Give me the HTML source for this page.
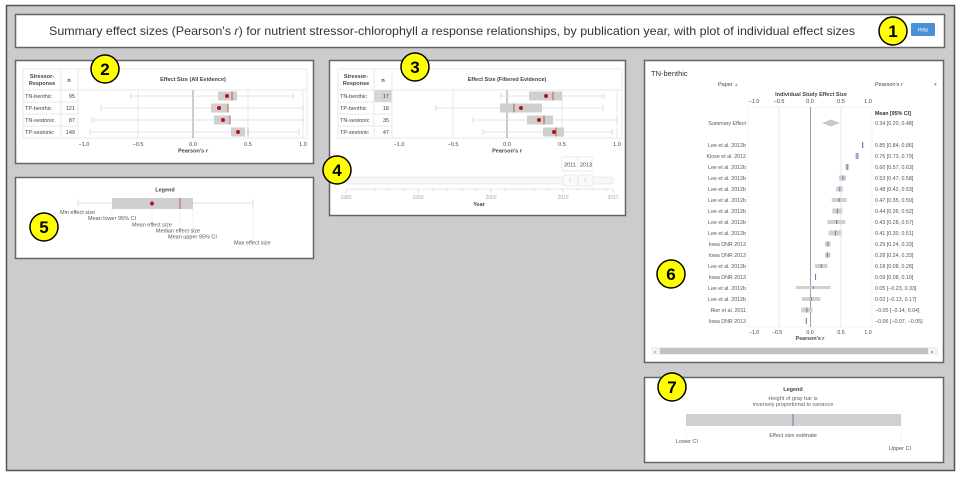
<!DOCTYPE html>
<html><head><meta charset="utf-8"><style>
html,body{margin:0;padding:0;background:#fff;}
svg{display:block;font-family:"Liberation Sans",sans-serif;}
</style></head><body>
<svg width="960" height="481" viewBox="0 0 960 481" xmlns="http://www.w3.org/2000/svg">
<rect x="6.5" y="5.5" width="948" height="465" fill="#cccccc" stroke="#555" stroke-width="1.5"/>
<!-- header -->
<rect x="15.5" y="14.5" width="929" height="33" fill="#fff" stroke="#666" stroke-width="1.5"/>
<text x="452" y="35" font-size="12" fill="#333" text-anchor="middle" textLength="806" lengthAdjust="spacingAndGlyphs">Summary effect sizes (Pearson's <tspan font-style="italic">r</tspan>) for nutrient stressor-chlorophyll <tspan font-style="italic">a</tspan> response relationships, by publication year, with plot of individual effect sizes</text>
<rect x="911" y="23" width="24" height="13" fill="#4a90d9" rx="1"/>
<text x="923" y="31.5" font-size="5" fill="#fff" text-anchor="middle">Help</text>

<!-- panel 2 -->
<rect x="15.5" y="60.5" width="298" height="103" fill="#fff" stroke="#666" stroke-width="1.5"/>
<g stroke="#e3e3e3" stroke-width="0.8" fill="none">
<rect x="23" y="69" width="284" height="69"/>
<line x1="23" y1="90" x2="307" y2="90"/><line x1="23" y1="102" x2="78" y2="102"/><line x1="23" y1="114" x2="78" y2="114"/><line x1="23" y1="126" x2="78" y2="126"/>
<line x1="61" y1="69" x2="61" y2="138"/><line x1="78" y1="69" x2="78" y2="138"/>
<line x1="138" y1="90" x2="138" y2="138"/><line x1="248" y1="90" x2="248" y2="138"/><line x1="303" y1="90" x2="303" y2="138"/>
</g>
<line x1="193" y1="90" x2="193" y2="138" stroke="#999" stroke-width="1"/>
<g font-size="5.5" fill="#444">
<text x="42" y="78" text-anchor="middle" font-weight="bold">Stressor-</text><text x="42" y="85" text-anchor="middle" font-weight="bold">Response</text>
<text x="69" y="82" text-anchor="middle" font-weight="bold">n</text>
<text x="193" y="81" text-anchor="middle" font-weight="bold">Effect Size (All Evidence)</text>
<text x="25" y="98">TN-benthic</text><text x="75" y="98" text-anchor="end">95</text>
<text x="25" y="110">TP-benthic</text><text x="75" y="110" text-anchor="end">121</text>
<text x="25" y="122">TN-sestonic</text><text x="75" y="122" text-anchor="end">87</text>
<text x="25" y="134">TP-sestonic</text><text x="75" y="134" text-anchor="end">149</text>
<text x="84" y="146" text-anchor="middle">−1.0</text><text x="138" y="146" text-anchor="middle">−0.5</text><text x="193" y="146" text-anchor="middle">0.0</text><text x="248" y="146" text-anchor="middle">0.5</text><text x="303" y="146" text-anchor="middle">1.0</text>
<text x="193" y="152.5" text-anchor="middle" font-weight="bold">Pearson's <tspan font-style="italic">r</tspan></text>
</g>
<g stroke="#d6d6d6" stroke-width="0.8">
<line x1="131" y1="96" x2="293" y2="96"/><line x1="131" y1="93" x2="131" y2="99"/><line x1="293" y1="93" x2="293" y2="99"/>
<line x1="101" y1="108" x2="303" y2="108"/><line x1="101" y1="105" x2="101" y2="111"/><line x1="303" y1="105" x2="303" y2="111"/>
<line x1="92" y1="120" x2="303" y2="120"/><line x1="92" y1="117" x2="92" y2="123"/><line x1="303" y1="117" x2="303" y2="123"/>
<line x1="90" y1="132" x2="299" y2="132"/><line x1="90" y1="129" x2="90" y2="135"/><line x1="299" y1="129" x2="299" y2="135"/>
</g>
<g fill="#cfcfcf">
<rect x="218" y="91.5" width="19" height="9"/><rect x="211" y="103.5" width="17" height="9"/><rect x="214" y="115.5" width="16" height="9"/><rect x="231" y="127.5" width="14" height="9"/>
</g>
<g stroke="#c0392b" stroke-width="0.8">
<line x1="232" y1="91.5" x2="232" y2="100.5"/><line x1="228" y1="103.5" x2="228" y2="112.5"/><line x1="230" y1="115.5" x2="230" y2="124.5"/><line x1="248" y1="127.5" x2="248" y2="136.5" stroke="#e49a9a"/>
</g>
<g fill="#b5121b"><circle cx="227" cy="96" r="2"/><circle cx="219" cy="108" r="2"/><circle cx="223" cy="120" r="2"/><circle cx="238" cy="132" r="2"/></g>

<!-- panel 5 -->
<rect x="15.5" y="177.5" width="298" height="81" fill="#fff" stroke="#666" stroke-width="1.5"/>
<text x="165" y="191.5" font-size="5.5" font-weight="bold" fill="#444" text-anchor="middle">Legend</text>
<line x1="78" y1="203" x2="253" y2="203" stroke="#d6d6d6" stroke-width="0.8"/>
<line x1="78" y1="199" x2="78" y2="207" stroke="#d6d6d6" stroke-width="0.8"/><line x1="253" y1="199" x2="253" y2="207" stroke="#d6d6d6" stroke-width="0.8"/>
<rect x="112" y="198" width="81" height="11" fill="#cfcfcf"/>
<line x1="180" y1="198" x2="180" y2="209" stroke="#c0392b" stroke-width="0.8"/>
<circle cx="152" cy="203.5" r="2" fill="#b5121b"/>
<g stroke="#ccc" stroke-width="0.5" stroke-dasharray="1,1">
<line x1="112" y1="209" x2="112" y2="216"/><line x1="152" y1="209" x2="152" y2="223"/><line x1="180" y1="209" x2="180" y2="229"/><line x1="193" y1="209" x2="193" y2="235"/><line x1="253" y1="207" x2="253" y2="241"/>
</g>
<g font-size="5.5" fill="#555">
<text x="60" y="214">Min effect size</text><text x="88" y="220">Mean lower 95% CI</text><text x="132" y="226.5">Mean effect size</text><text x="156" y="232.5">Median effect size</text><text x="168" y="238.5">Mean upper 95% CI</text><text x="234" y="244.5">Max effect size</text>
</g>

<!-- panel 3/4 -->
<rect x="329.5" y="60.5" width="296" height="155" fill="#fff" stroke="#666" stroke-width="1.5"/>
<rect x="374" y="90" width="18" height="12" fill="#d5d5d5"/>
<g stroke="#e3e3e3" stroke-width="0.8" fill="none">
<rect x="338" y="69" width="284" height="69"/>
<line x1="338" y1="90" x2="622" y2="90"/><line x1="338" y1="102" x2="392" y2="102"/><line x1="338" y1="114" x2="392" y2="114"/><line x1="338" y1="126" x2="392" y2="126"/>
<line x1="374" y1="69" x2="374" y2="138"/><line x1="392" y1="69" x2="392" y2="138"/>
<line x1="453" y1="90" x2="453" y2="138"/><line x1="562" y1="90" x2="562" y2="138"/><line x1="617" y1="90" x2="617" y2="138"/>
</g>
<line x1="507" y1="90" x2="507" y2="138" stroke="#999" stroke-width="1"/>
<g font-size="5.5" fill="#444">
<text x="356" y="78" text-anchor="middle" font-weight="bold">Stressor-</text><text x="356" y="85" text-anchor="middle" font-weight="bold">Response</text>
<text x="383" y="82" text-anchor="middle" font-weight="bold">n</text>
<text x="507" y="81" text-anchor="middle" font-weight="bold">Effect Size (Filtered Evidence)</text>
<text x="340" y="98">TN-benthic</text><text x="389" y="98" text-anchor="end">17</text>
<text x="340" y="110">TP-benthic</text><text x="389" y="110" text-anchor="end">18</text>
<text x="340" y="122">TN-sestonic</text><text x="389" y="122" text-anchor="end">35</text>
<text x="340" y="134">TP-sestonic</text><text x="389" y="134" text-anchor="end">47</text>
<text x="399" y="146" text-anchor="middle">−1.0</text><text x="453" y="146" text-anchor="middle">−0.5</text><text x="507" y="146" text-anchor="middle">0.0</text><text x="562" y="146" text-anchor="middle">0.5</text><text x="617" y="146" text-anchor="middle">1.0</text>
<text x="507" y="152.5" text-anchor="middle" font-weight="bold">Pearson's <tspan font-style="italic">r</tspan></text>
</g>
<g stroke="#d6d6d6" stroke-width="0.8">
<line x1="501" y1="96" x2="604" y2="96"/><line x1="501" y1="93" x2="501" y2="99"/><line x1="604" y1="93" x2="604" y2="99"/>
<line x1="436" y1="108" x2="603" y2="108"/><line x1="436" y1="105" x2="436" y2="111"/><line x1="603" y1="105" x2="603" y2="111"/>
<line x1="473" y1="120" x2="617" y2="120"/><line x1="473" y1="117" x2="473" y2="123"/><line x1="617" y1="117" x2="617" y2="123"/>
<line x1="483" y1="132" x2="612" y2="132"/><line x1="483" y1="129" x2="483" y2="135"/><line x1="612" y1="129" x2="612" y2="135"/>
</g>
<g fill="#cfcfcf">
<rect x="529" y="91.5" width="33" height="9"/><rect x="500" y="103.5" width="42" height="9"/><rect x="527" y="115.5" width="26" height="9"/><rect x="543" y="127.5" width="21" height="9"/>
</g>
<g stroke="#c0392b" stroke-width="0.8">
<line x1="553" y1="91.5" x2="553" y2="100.5"/><line x1="514" y1="103.5" x2="514" y2="112.5"/><line x1="544" y1="115.5" x2="544" y2="124.5"/><line x1="556" y1="127.5" x2="556" y2="136.5"/>
</g>
<g fill="#b5121b"><circle cx="546" cy="96" r="2"/><circle cx="521" cy="108" r="2"/><circle cx="539" cy="120" r="2"/><circle cx="554" cy="132" r="2"/></g>
<!-- slider -->
<rect x="346" y="177" width="267" height="7" rx="3" fill="#f7f7f7" stroke="#ddd" stroke-width="0.6"/>
<rect x="563" y="175" width="15" height="11" rx="2" fill="#fafafa" stroke="#ddd" stroke-width="0.6"/>
<rect x="578" y="175" width="15" height="11" rx="2" fill="#fafafa" stroke="#ddd" stroke-width="0.6"/>
<line x1="570" y1="178" x2="570" y2="183" stroke="#ccc" stroke-width="0.6"/><line x1="585" y1="178" x2="585" y2="183" stroke="#ccc" stroke-width="0.6"/>
<rect x="562" y="157" width="30" height="14" fill="#fff" stroke="#ddd" stroke-width="0.6"/>
<line x1="578" y1="157" x2="578" y2="171" stroke="#ddd" stroke-width="0.6"/>
<text x="570" y="166.5" font-size="5.5" fill="#444" text-anchor="middle">2011</text><text x="586" y="166.5" font-size="5.5" fill="#444" text-anchor="middle">2013</text>
<line x1="346" y1="189" x2="613" y2="189" stroke="#ccc" stroke-width="0.5"/>
<g stroke="#bbb" stroke-width="0.5">
<line x1="346" y1="189" x2="346" y2="193"/><line x1="418" y1="189" x2="418" y2="193"/><line x1="491" y1="189" x2="491" y2="193"/><line x1="563" y1="189" x2="563" y2="193"/><line x1="613" y1="189" x2="613" y2="193"/>
<line x1="360" y1="189" x2="360" y2="191"/><line x1="375" y1="189" x2="375" y2="191"/><line x1="389" y1="189" x2="389" y2="191"/><line x1="404" y1="189" x2="404" y2="191"/>
<line x1="433" y1="189" x2="433" y2="191"/><line x1="447" y1="189" x2="447" y2="191"/><line x1="462" y1="189" x2="462" y2="191"/><line x1="476" y1="189" x2="476" y2="191"/>
<line x1="505" y1="189" x2="505" y2="191"/><line x1="520" y1="189" x2="520" y2="191"/><line x1="534" y1="189" x2="534" y2="191"/><line x1="549" y1="189" x2="549" y2="191"/>
<line x1="578" y1="189" x2="578" y2="191"/><line x1="592" y1="189" x2="592" y2="191"/><line x1="606" y1="189" x2="606" y2="191"/>
</g>
<g font-size="5" fill="#aaa" text-anchor="middle">
<text x="346" y="199">1980</text><text x="418" y="199">1990</text><text x="491" y="199">2000</text><text x="563" y="199">2010</text><text x="613" y="199">2017</text>
</g>
<text x="479" y="206" font-size="5.5" font-weight="bold" fill="#444" text-anchor="middle">Year</text>

<!-- panel 6 -->
<rect x="644.5" y="60.5" width="299" height="302" fill="#fff" stroke="#666" stroke-width="1.5"/>
<text x="651" y="76" font-size="7.5" fill="#333">TN-benthic</text>
<g font-size="5.5" fill="#444">
<text x="718" y="86">Paper</text><text x="735" y="86" fill="#aaa">▴</text>
<text x="875" y="86">Pearson's <tspan font-style="italic">r</tspan></text><text x="934" y="86" fill="#999">▾</text>
<text x="811" y="96" text-anchor="middle" font-weight="bold">Individual Study Effect Size</text>
<text x="754" y="103" text-anchor="middle">−1.0</text><text x="779" y="103" text-anchor="middle">−0.5</text><text x="810" y="103" text-anchor="middle">0.0</text><text x="841" y="103" text-anchor="middle">0.5</text><text x="868" y="103" text-anchor="middle">1.0</text>
</g>
<rect x="748" y="107" width="124" height="220" fill="none" stroke="#eee" stroke-width="0.6"/>
<line x1="779" y1="107" x2="779" y2="327" stroke="#e2e2e2" stroke-width="0.8"/>
<line x1="841" y1="107" x2="841" y2="327" stroke="#e2e2e2" stroke-width="0.8"/>
<line x1="810.5" y1="107" x2="810.5" y2="327" stroke="#888" stroke-width="0.8"/>
<polygon points="822,123 831,119.5 840,123 831,126.5" fill="#c8c8c8"/>
<g font-size="5.3" fill="#555">
<text x="875" y="115" font-weight="bold" fill="#333">Mean [95% CI]</text>
<text x="875" y="125">0.34 [0.20, 0.48]</text>
<text x="746" y="125" text-anchor="end">Summary Effect</text>
</g>
<g font-size="5.3" fill="#556" text-anchor="end">
<text x="746" y="147">Lee et al. 2012b</text><text x="746" y="158">Klose et al. 2012</text><text x="746" y="169">Lee et al. 2012b</text><text x="746" y="180">Lee et al. 2012b</text><text x="746" y="191">Lee et al. 2012b</text><text x="746" y="202">Lee et al. 2012b</text><text x="746" y="213">Lee et al. 2012b</text><text x="746" y="224">Lee et al. 2012b</text><text x="746" y="235">Lee et al. 2012b</text><text x="746" y="246">Iowa DNR 2013</text><text x="746" y="257">Iowa DNR 2013</text><text x="746" y="268">Lee et al. 2012b</text><text x="746" y="279">Iowa DNR 2013</text><text x="746" y="290">Lee et al. 2012b</text><text x="746" y="301">Lee et al. 2012b</text><text x="746" y="312">Rier et al. 2011</text><text x="746" y="323">Iowa DNR 2013</text>
</g>
<g font-size="5.3" fill="#555">
<text x="875" y="147">0.85 [0.84, 0.86]</text><text x="875" y="158">0.76 [0.73, 0.79]</text><text x="875" y="169">0.60 [0.57, 0.63]</text><text x="875" y="180">0.53 [0.47, 0.58]</text><text x="875" y="191">0.48 [0.42, 0.53]</text><text x="875" y="202">0.47 [0.35, 0.59]</text><text x="875" y="213">0.44 [0.36, 0.52]</text><text x="875" y="224">0.43 [0.28, 0.57]</text><text x="875" y="235">0.41 [0.30, 0.51]</text><text x="875" y="246">0.29 [0.24, 0.33]</text><text x="875" y="257">0.28 [0.24, 0.33]</text><text x="875" y="268">0.18 [0.08, 0.28]</text><text x="875" y="279">0.09 [0.08, 0.10]</text><text x="875" y="290">0.05 [−0.23, 0.33]</text><text x="875" y="301">0.02 [−0.13, 0.17]</text><text x="875" y="312">−0.05 [−0.14, 0.04]</text><text x="875" y="323">−0.06 [−0.07, −0.05]</text>
</g>
<g fill="#d0d0d0">
<rect x="862" y="142" width="1.5" height="6"/><rect x="855.3" y="153" width="3.7" height="6"/><rect x="845.3" y="164" width="3.8" height="6"/><rect x="839.1" y="175.5" width="6.9" height="5"/><rect x="836" y="186.5" width="6.9" height="5"/><rect x="831.7" y="198" width="14.9" height="4"/><rect x="832.3" y="208.5" width="9.9" height="5"/><rect x="827.4" y="220" width="17.9" height="4"/><rect x="828.6" y="230.5" width="13" height="5"/><rect x="824.9" y="241.5" width="5.6" height="5"/><rect x="824.9" y="252.5" width="5.6" height="5"/><rect x="815" y="264" width="12.4" height="4"/><rect x="815" y="274" width="1.2" height="6"/><rect x="795.7" y="286" width="34.8" height="3"/><rect x="801.9" y="297" width="18.6" height="4"/><rect x="801.3" y="307.5" width="11.2" height="5"/><rect x="805.7" y="318" width="1.2" height="6"/>
</g>
<g stroke="#5a5fb0" stroke-width="0.8">
<line x1="862.7" y1="142" x2="862.7" y2="148"/><line x1="857.1" y1="153" x2="857.1" y2="159"/><line x1="847.2" y1="164" x2="847.2" y2="170"/><line x1="842.9" y1="175.5" x2="842.9" y2="180.5"/><line x1="839.8" y1="186.5" x2="839.8" y2="191.5"/><line x1="839.1" y1="198" x2="839.1" y2="202"/><line x1="837.3" y1="208.5" x2="837.3" y2="213.5"/><line x1="836.7" y1="220" x2="836.7" y2="224"/><line x1="835.4" y1="230.5" x2="835.4" y2="235.5"/><line x1="828" y1="241.5" x2="828" y2="246.5"/><line x1="827.4" y1="252.5" x2="827.4" y2="257.5"/><line x1="821.2" y1="264" x2="821.2" y2="268"/><line x1="815.6" y1="274" x2="815.6" y2="280"/><line x1="813.1" y1="286" x2="813.1" y2="289"/><line x1="811.2" y1="297" x2="811.2" y2="301"/><line x1="806.9" y1="307.5" x2="806.9" y2="312.5"/><line x1="806.3" y1="318" x2="806.3" y2="324"/>
</g>
<g font-size="5.3" fill="#444" text-anchor="middle">
<text x="754" y="334">−1.0</text><text x="777" y="334">−0.5</text><text x="810" y="334">0.0</text><text x="841" y="334">0.5</text><text x="868" y="334">1.0</text>
<text x="810" y="340" font-weight="bold">Pearson's <tspan font-style="italic">r</tspan></text>
</g>
<rect x="651" y="347" width="287" height="8" fill="#f1f1f1"/>
<rect x="660" y="348" width="268" height="6" fill="#c1c1c1"/>
<text x="654" y="353" font-size="4" fill="#999">◂</text><text x="931" y="353" font-size="4" fill="#666">▸</text>

<!-- panel 7 -->
<rect x="644.5" y="377.5" width="299" height="85" fill="#fff" stroke="#666" stroke-width="1.5"/>
<text x="793" y="391" font-size="5.5" font-weight="bold" fill="#444" text-anchor="middle">Legend</text>
<text x="793" y="400" font-size="5.5" fill="#666" text-anchor="middle">Height of gray bar is</text>
<text x="793" y="406" font-size="5.5" fill="#666" text-anchor="middle">inversely proportional to variance</text>
<rect x="686" y="414" width="215" height="12" fill="#d0d0d0"/>
<line x1="793" y1="414" x2="793" y2="426" stroke="#5a5fb0" stroke-width="0.8"/>
<g stroke="#ddd" stroke-width="0.5" stroke-dasharray="1,1"><line x1="686" y1="426" x2="686" y2="437"/><line x1="793" y1="426" x2="793" y2="431"/><line x1="901" y1="426" x2="901" y2="444"/></g>
<g font-size="5.5" fill="#555" text-anchor="middle"><text x="793" y="437">Effect size estimate</text><text x="687" y="443">Lower CI</text><text x="900" y="450">Upper CI</text></g>

<!-- badges -->
<g stroke="#000" stroke-width="1.5" fill="#ffff00">
<circle cx="893" cy="31" r="14"/><circle cx="105" cy="69" r="14"/><circle cx="415" cy="67" r="14"/><circle cx="337" cy="170" r="14"/><circle cx="44" cy="227" r="14"/><circle cx="671" cy="274" r="14"/><circle cx="672" cy="387" r="14"/>
</g>
<g font-size="17" font-weight="bold" fill="#000" text-anchor="middle">
<text x="893" y="37">1</text><text x="105" y="75">2</text><text x="415" y="73">3</text><text x="337" y="176">4</text><text x="44" y="233">5</text><text x="671" y="280">6</text><text x="672" y="393">7</text>
</g>
</svg>
</body></html>
